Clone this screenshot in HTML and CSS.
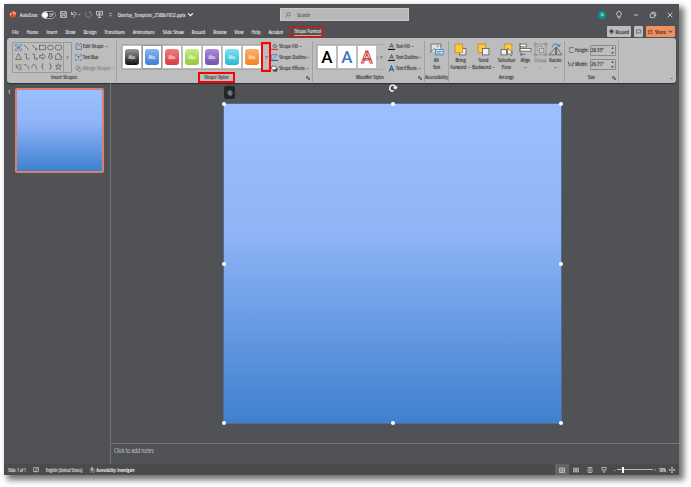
FILE: index.html
```html
<!DOCTYPE html>
<html lang="en">
<head>
<meta charset="utf-8">
<title>Overlay_Template_2588x1952.pptx</title>
<link rel="stylesheet" href="styles.css">
</head>
<body>
<div class="app">
  <header class="titlebar">
    <div class="quick">
      <svg class="logo" viewBox="0 0 12 12"><circle cx="6.5" cy="6" r="5.5" fill="#d9512f"/><path d="M6.500 .5a5.500 5.500 0 0 1 5.500 5.500h-5.500z" fill="#f59a7b"/><rect y="3" width="6" height="6" rx="1" fill="#b7321a"/><path d="M2.200 8V4.200h1.300a1.100 1.100 0 0 1 0 2.300H2.200" stroke="#fff" fill="none"/></svg>
      <label class="autosave">AutoSave <span class="toggle"><input type="checkbox"><span>Off</span></span></label>
      <button aria-label="Save"><svg viewBox="0 0 12 12"><path d="M1 1h9l1 1v9H1zM3 1v4h6V1M3 11V7h6v4"/></svg></button>
      <button aria-label="Undo" class="wide"><svg viewBox="0 0 18 12"><path d="M1 1v5h5M1 6c3-5 8-5 8-1 0 2-3 4-5 6M13 5l2 2 2-2"/></svg></button>
      <button aria-label="Redo" class="dim"><svg viewBox="0 0 12 12"><path d="M9 2a5 5 0 1 1-6 0M9 5V1h-3"/></svg></button>
      <button aria-label="Present"><svg viewBox="0 0 12 12"><path d="M0 1h12M1 1v6h10V1M6 7v4M3 11h6M5 3l3 1-3 2z"/></svg></button>
      <button aria-label="Customize"><svg viewBox="0 0 12 12"><path d="M4 4h4M4 7l2 2 2-2"/></svg></button>
      <button class="filename">Overlay_Template_2588x1952.pptx <svg class="chev" viewBox="0 0 6 6"><path d="M1 2l2 2 2-2"/></svg></button>
    </div>
    <label class="search"><svg viewBox="0 0 12 12"><circle cx="7" cy="4.500" r="3.500"/><path d="M4.500 7L1 11"/></svg><input type="text" placeholder="Search" aria-label="Search"></label>
    <div class="window">
      <span class="avatar">JD</span>
      <button aria-label="Tips"><svg viewBox="0 0 12 12"><path d="M4 9V7a3.500 3.500 0 1 1 4 0v2zM5 11h2"/></svg></button>
      <button aria-label="Minimize"><svg viewBox="0 0 12 12"><path d="M3 6h6"/></svg></button>
      <button aria-label="Restore"><svg viewBox="0 0 12 12"><rect x="2" y="4" width="6" height="6" rx="1"/><path d="M4 2h4q2 0 2 2v4"/></svg></button>
      <button aria-label="Close"><svg viewBox="0 0 12 12"><path d="M2.500 2.500l7 7M9.500 2.500l-7 7"/></svg></button>
    </div>
  </header>

  <div class="tabrow">
    <nav class="tabs"><a href="#">File</a><a href="#">Home</a><a href="#">Insert</a><a href="#">Draw</a><a href="#">Design</a><a href="#">Transitions</a><a href="#">Animations</a><a href="#">Slide Show</a><a href="#">Record</a><a href="#">Review</a><a href="#">View</a><a href="#">Help</a><a href="#">Acrobat</a><a href="#" class="current"><span>Shape Format</span></a></nav>
    <div class="actions">
      <button><svg viewBox="0 0 12 12"><circle cx="6" cy="6" r="5"/><circle cx="6" cy="6" r="2.500" fill="#222"/></svg>Record</button>
      <button aria-label="Comments"><svg viewBox="0 0 12 12"><path d="M1 2h10v7H6l-3 2V9H1z"/></svg></button>
      <button class="share"><svg viewBox="0 0 12 12"><path d="M5 3H1v8h9V8M4 8c0-3 2-4 5-4M7 1l4 3-4 3"/></svg>Share<svg class="chev" viewBox="0 0 6 6"><path d="M1 2l2 2 2-2"/></svg></button>
    </div>
  </div>

  <main class="ribbon">
    <section class="group insert">
      <div class="tools">
        <div class="shapes">
          <div class="shapegrid">
            <svg class="blue" viewBox="0 0 12 12"><path d="M1 4V1h3M8 1h3v3M11 8v3H8M4 11H1V8M3 4h6M3 6h6M3 8h6"/></svg>
            <svg viewBox="0 0 12 12"><path d="M2 2l8 8"/></svg>
            <svg viewBox="0 0 12 12"><path d="M2 2l8 8M10 7v3H7"/></svg>
            <svg viewBox="0 0 12 12"><rect x="1" y="2" width="10" height="8"/></svg>
            <svg viewBox="0 0 12 12"><ellipse cx="6" cy="6" rx="5" ry="4"/></svg>
            <svg viewBox="0 0 12 12"><rect x="1" y="2" width="10" height="8" rx="2"/></svg>
            <svg viewBox="0 0 12 12"><path d="M6 1l5 10H1z"/></svg>
            <svg viewBox="0 0 12 12"><path d="M2 2h4v8h5"/></svg>
            <svg viewBox="0 0 12 12"><path d="M2 2h4v8h5M9 8l2 2-2 2"/></svg>
            <svg viewBox="0 0 12 12"><path d="M1 4h5V1l5 5-5 5V8H1z"/></svg>
            <svg viewBox="0 0 12 12"><path d="M4 1h4v6h2l-4 4-4-4h2z"/></svg>
            <svg viewBox="0 0 12 12"><path d="M1 11V4l4-3h3v4h3v6z"/></svg>
            <svg viewBox="0 0 12 12"><path d="M2 2c0 6 2 9 9 9M2 7c6 0 3-6 7-4s-3 5 2 6"/></svg>
            <svg viewBox="0 0 12 12"><path d="M1 3c5-1 8 2 9 8"/></svg>
            <svg viewBox="0 0 12 12"><path d="M1 8c3-9 5-9 9 3"/></svg>
            <svg viewBox="0 0 12 12"><path d="M8 1C4 1 8 6 4 6c4 0 0 5 4 5"/></svg>
            <svg viewBox="0 0 12 12"><path d="M4 1c4 0 0 5 4 5-4 0 0 5-4 5"/></svg>
            <svg viewBox="0 0 12 12"><path d="M6 1l1.500 3.500H11L8 7l1 4-3-2-3 2 1-4-3-2.500h3.500z"/></svg>
          </div>
          <button class="more" aria-label="More shapes"><svg viewBox="0 0 6 6"><path d="M1 1h4M1 3l2 2 2-2"/></svg></button>
        </div>
        <div class="list">
          <button><svg class="blue" viewBox="0 0 12 12"><path d="M2 1h3M8 1h3M2 1v10h9V1M5 1l4 5"/></svg>Edit Shape<svg class="chev" viewBox="0 0 6 6"><path d="M1 2l2 2 2-2"/></svg></button>
          <button><svg class="blue" viewBox="0 0 12 12"><path d="M1 4V1h3M8 1h3v3M11 8v3H8M4 11H1V8M3 4h6M6 4v5"/></svg>Text Box</button>
          <button class="dim"><svg viewBox="0 0 12 12"><circle cx="4.500" cy="4.500" r="3.500"/><circle cx="7.500" cy="7.500" r="3.500"/></svg>Merge Shapes<svg class="chev" viewBox="0 0 6 6"><path d="M1 2l2 2 2-2"/></svg></button>
        </div>
      </div>
      <h2>Insert Shapes</h2>
    </section>

    <section class="group styles">
      <div class="tools">
        <div class="gallery">
          <button class="swatch black"><span>Abc</span></button><button class="swatch azure picked"><span>Abc</span></button><button class="swatch red"><span>Abc</span></button><button class="swatch green"><span>Abc</span></button><button class="swatch purple"><span>Abc</span></button><button class="swatch cyan"><span>Abc</span></button><button class="swatch orange"><span>Abc</span></button>
          <button class="more marked" aria-label="More styles"><svg viewBox="0 0 6 6"><path d="M1 1h4M1 3l2 2 2-2"/></svg></button>
        </div>
        <div class="list">
          <button><svg viewBox="0 0 12 12"><path d="M3 5l4-3 3 4-4 2z"/><path d="M0 11h12" stroke="#d33" stroke-width="2"/></svg>Shape Fill<svg class="chev" viewBox="0 0 6 6"><path d="M1 2l2 2 2-2"/></svg></button>
          <button><svg viewBox="0 0 12 12"><path d="M10 1H1v8M4 8l7-7" stroke="#1d66b5"/><path d="M0 11h12" stroke="#1d66b5" stroke-width="2"/></svg>Shape Outline<svg class="chev" viewBox="0 0 6 6"><path d="M1 2l2 2 2-2"/></svg></button>
          <button><svg viewBox="0 0 12 12"><path d="M3 8l-2-2 1-4h6l1 4-2 2z" fill="#fff"/><path d="M4 10h5l2-4" stroke-width="2"/></svg>Shape Effects<svg class="chev" viewBox="0 0 6 6"><path d="M1 2l2 2 2-2"/></svg></button>
        </div>
      </div>
      <h2><span class="outlined">Shape Styles</span></h2>
      <svg class="launcher" viewBox="0 0 6 6"><path d="M1 4V1h3M2 2l3 3M5 3v2H3"/></svg>
    </section>

    <section class="group wordart">
      <div class="tools">
        <div class="gallery">
          <button class="letter">A</button><button class="letter mid">A</button><button class="letter line">A</button>
          <button class="more" aria-label="More WordArt"><svg viewBox="0 0 6 6"><path d="M1 1h4M1 3l2 2 2-2"/></svg></button>
        </div>
        <div class="list">
          <button><svg viewBox="0 0 12 12"><path d="M3 8l3-7 3 7M4 6h4"/><path d="M0 11h12" stroke="#111" stroke-width="2"/></svg>Text Fill<svg class="chev" viewBox="0 0 6 6"><path d="M1 2l2 2 2-2"/></svg></button>
          <button><svg viewBox="0 0 12 12"><path d="M3 8l3-7 3 7M4 6h4"/><path d="M0 11h12" stroke="#111" stroke-width="2"/></svg>Text Outline<svg class="chev" viewBox="0 0 6 6"><path d="M1 2l2 2 2-2"/></svg></button>
          <button><svg class="blue" viewBox="0 0 12 12"><path d="M2 11l4-9 4 9M4 8h4" stroke-width="2"/></svg>Text Effects<svg class="chev" viewBox="0 0 6 6"><path d="M1 2l2 2 2-2"/></svg></button>
        </div>
      </div>
      <h2>WordArt Styles</h2>
      <svg class="launcher" viewBox="0 0 6 6"><path d="M1 4V1h3M2 2l3 3M5 3v2H3"/></svg>
    </section>

    <section class="group access">
      <div class="tools">
        <button class="big"><svg viewBox="0 0 12 12"><path d="M1 9V1h9v4M1 8l3-3 2 2M6 3h2" fill="#e4e4e4"/><rect x="5" y="6" width="7" height="5" fill="#d9eaf7" stroke="#2878b8"/><path d="M6 8h5M6 9.500h4" stroke="#2878b8"/></svg><span>Alt<br>Text</span></button>
      </div>
      <h2>Accessibility</h2>
    </section>

    <section class="group arrange">
      <div class="tools">
        <button class="big"><svg viewBox="0 0 12 12"><rect x="5" y="5" width="6" height="6" fill="#eee"/><rect x="1" y="1" width="7" height="8" fill="#ffc83d" stroke="#c88a10"/></svg><span>Bring<br>Forward<svg class="chev" viewBox="0 0 6 6"><path d="M1 2l2 2 2-2"/></svg></span></button>
        <button class="big"><svg viewBox="0 0 12 12"><rect x="1" y="1" width="7" height="8" fill="#ffc83d" stroke="#c88a10"/><rect x="5" y="5" width="6" height="6" fill="#eee"/></svg><span>Send<br>Backward<svg class="chev" viewBox="0 0 6 6"><path d="M1 2l2 2 2-2"/></svg></span></button>
        <button class="big"><svg viewBox="0 0 12 12"><rect x="4" y="1" width="7" height="7" fill="#ffc83d" stroke="#c88a10"/><rect x="1" y="6" width="5" height="5" fill="#eee"/><path d="M7 5v6l1.500-1.500L10 12l1-1-1-2h2z" fill="#fff"/></svg><span>Selection<br>Pane</span></button>
        <button class="big slim"><svg viewBox="0 0 12 12"><path d="M1 0v9"/><rect x="1" y="1" width="6" height="2.500" fill="#fff"/><rect x="1" y="5" width="10" height="2.500" fill="#fff"/><path d="M6 10.500H1M3 9l-2 1.500L3 12" stroke="#1d66b5"/></svg><span>Align<br><svg class="chev" viewBox="0 0 6 6"><path d="M1 2l2 2 2-2"/></svg></span></button>
        <button class="big slim dim"><svg viewBox="0 0 12 12"><rect x="1" y="1" width="10" height="10"/><rect x="3" y="3" width="4" height="4" fill="#ddd"/><rect x="5" y="5" width="4" height="4" fill="#ddd"/><path d="M0 0h2v2H0zM10 0h2v2h-2zM0 10h2v2H0zM10 10h2v2h-2z"/></svg><span>Group<br><svg class="chev" viewBox="0 0 6 6"><path d="M1 2l2 2 2-2"/></svg></span></button>
        <button class="big slim"><svg viewBox="0 0 12 12"><path d="M6 4v7H0zM7 4v7h5z"/><path d="M3 4c0-4 6-4 6-1M7 2l2 1.500L10.500 1" stroke="#1d66b5"/></svg><span>Rotate<br><svg class="chev" viewBox="0 0 6 6"><path d="M1 2l2 2 2-2"/></svg></span></button>
      </div>
      <h2>Arrange</h2>
    </section>

    <section class="group size">
      <div class="fields">
        <label for="height"><svg viewBox="0 0 12 12"><path d="M5 1h6M5 11h6"/><path d="M3 1v10M1 3l2-2 2 2M1 9l2 2 2-2" stroke="#1d66b5"/></svg>Height:</label><span class="spin"><input type="text" id="height" value='20.33"'><svg viewBox="0 0 6 12"><path d="M2 4l1-2 1 2M2 8l1 2 1-2"/></svg></span>
        <label for="width"><svg viewBox="0 0 12 12"><path d="M1 1v5h10V1"/><path d="M1 9h10M3 7L1 9l2 2M9 7l2 2-2 2" stroke="#1d66b5"/></svg>Width:</label><span class="spin"><input type="text" id="width" value='26.75"'><svg viewBox="0 0 6 12"><path d="M2 4l1-2 1 2M2 8l1 2 1-2"/></svg></span>
      </div>
      <h2>Size</h2>
      <svg class="launcher" viewBox="0 0 6 6"><path d="M1 4V1h3M2 2l3 3M5 3v2H3"/></svg>
    </section>
    <button class="collapse" aria-label="Collapse ribbon"><svg class="chev" viewBox="0 0 6 6"><path d="M1 2l2 2 2-2"/></svg></button>
  </main>

  <div class="workspace">
    <aside class="thumbs"><span>1</span><div class="thumb"></div></aside>
    <div class="editor">
      <div class="canvas">
        <div class="slide">
          <i class="h nw"></i><i class="h n"></i><i class="h ne"></i><i class="h w"></i><i class="h e"></i><i class="h sw"></i><i class="h s"></i><i class="h se"></i>
          <svg class="turn" viewBox="0 0 12 12"><path d="M7 10.500H4A4.500 4.500 0 1 1 10 6M7 5l3 2 2-3"/></svg>
          <button class="badge" aria-label="Designer"><svg viewBox="0 0 12 12"><path d="M6 1a5 5 0 0 0-2 9M6 11a5 5 0 0 0 2-9M6 1v10M4 5l4-1M4 8l4-1"/></svg></button>
        </div>
      </div>
      <div class="notes">Click to add notes</div>
    </div>
  </div>

  <footer class="status">
    <span>Slide 1 of 1</span>
    <svg viewBox="0 0 12 12"><path d="M6 2v9M1 1h4l1 1 1-1h4v8H7l-1 1-1-1H1zM8 4h2"/></svg>
    <span class="lang">English (United States)</span>
    <span class="check"><svg viewBox="0 0 12 12"><circle cx="6" cy="2" r="1.500"/><path d="M1 4l4 1-1 6M11 4L7 5l1 3M5 5h2M7 9l2 2 3-4"/></svg>Accessibility: Investigate</span>
    <div class="views">
      <button class="on" aria-label="Normal"><svg viewBox="0 0 12 12"><path d="M1 2h10v9H1zM4 2v9M4 8h7M6 4h3M6 6h3"/></svg></button>
      <button aria-label="Sorter"><svg viewBox="0 0 12 12"><path d="M1 2h4v3H1zM7 2h4v3H7zM1 7h4v3H1zM7 7h4v3H7z"/></svg></button>
      <button aria-label="Reading"><svg viewBox="0 0 12 12"><path d="M2 1h8v10H2zM6 1v10M4 4h1M7 4h1M4 7h1M7 7h1"/></svg></button>
      <button aria-label="Slide show"><svg viewBox="0 0 12 12"><path d="M1 1h10M2 1v5h8V1M6 6v5M4 9l2 2 2-2"/></svg></button>
    </div>
    <div class="zoom"><button aria-label="Zoom out">−</button><input type="range" min="0" max="100" value="14" aria-label="Zoom"><button aria-label="Zoom in">+</button></div>
    <span>38%</span>
    <svg viewBox="0 0 12 12"><path d="M4 4h4v4H4zM6 0v3M6 9v3M0 6h3M9 6h3M4.500 1.500L6 0l1.500 1.500M4.500 10.500L6 12l1.500-1.500M1.500 4.500L0 6l1.500 1.500M10.500 4.500L12 6l-1.500 1.500"/></svg>
  </footer>
</div>
</body>
</html>
```
FILE: styles.css
```css
* { box-sizing: border-box; }
body {
  margin: 0;
  height: 100vh;
  padding: 4px 12px 12px 4px;
  background: #fff;
  font: 300 6px/8px "Open Sans Condensed Light", "Open Sans Condensed", "Liberation Sans Narrow", Roboto, sans-serif;
  text-shadow: 0 0 1px currentColor;
  color: #fff;
}
button, input { font: inherit; color: inherit; text-shadow: inherit; background: none; border: 0; padding: 0; margin: 0; }
button { display: flex; align-items: center; white-space: nowrap; }
a { color: inherit; text-decoration: none; }
svg { display: block; flex: none; width: 8px; height: 8px; fill: none; stroke: currentColor; overflow: visible; }
svg.chev { width: 3px; height: 3px; }
svg.blue { color: #1d66b5; }
.dim { opacity: .45; }

.app {
  display: flex;
  flex-direction: column;
  height: 100%;
  background: #505255;
  box-shadow: 4px 4px 6px 1px rgba(0, 0, 0, .55);
}

.titlebar { display: grid; grid-template-columns: 276px 129px 1fr; align-items: center; height: 21px; flex: none; }
.quick { display: flex; align-items: center; gap: 4px; padding-left: 5px; }
.quick svg { width: 7px; height: 7px; }
.quick .logo { stroke: none; }
.quick .wide svg { width: 10px; }
.autosave { display: flex; align-items: center; gap: 3px; }
.toggle { display: flex; align-items: center; gap: 1px; width: 15px; height: 8px; padding-left: 1px; border-radius: 4px; background: #2c2e30; outline: 1px solid #aaa; outline-offset: -1px; font-size: 5px; }
.toggle input { appearance: none; width: 6px; height: 6px; border-radius: 50%; background: #fff; flex: none; }
.filename { gap: 2px; }
.search { display: flex; align-items: center; gap: 6px; height: 13px; padding: 0 4px; background: #b9b9b9; border: 1px solid #c8c8c8; color: #444; }
.search svg { width: 6px; height: 6px; }
.search input { flex: 1; min-width: 0; outline: 0; }
.search input::placeholder { color: #444; }
.window { display: flex; align-items: center; justify-content: flex-end; gap: 9px; padding-right: 5px; }
.avatar { width: 8px; height: 8px; border-radius: 50%; background: #0a8f8c; font-size: 4px; text-align: center; }

.tabrow { display: flex; justify-content: space-between; align-items: center; height: 13px; flex: none; padding: 0 4px 0 8px; }
.tabs { display: flex; align-items: center; gap: 8px; white-space: nowrap; }
.tabs .current { border: 1px solid #f00; padding: 0 2px; outline: 1px solid #f00; outline-offset: -1px; }
.tabs .current span { display: block; border-bottom: 1px solid #e8a080; }
.actions { display: flex; gap: 3px; color: #111; }
.actions button { height: 11px; padding: 0 2px; gap: 2px; background: #bdbdbd; border-radius: 1px; }
.actions svg { width: 5px; height: 5px; }
.actions .share { background: #ee9160; }

.ribbon { display: flex; height: 45px; flex: none; margin: 0 3px; background: #bdbdbd; color: #222; border-radius: 3px; box-shadow: 0 1px 1px #2e3032; }
.group { display: flex; flex-direction: column; flex: none; position: relative; margin: 3px 0 1px; border-right: 1px solid #a2a2a2; }
.group h2 { margin: 0; height: 9px; font-size: 6px; line-height: 9px; font-weight: 300; text-align: center; white-space: nowrap; }
.tools { display: flex; flex: 1; align-items: center; gap: 3px; }
.insert { width: 110px; padding-left: 5px; }
.styles { width: 196px; padding-left: 4px; }
.wordart { width: 112px; padding-left: 3px; }
.access { width: 24px; }
.arrange { width: 116px; }
.size { width: 54px; }
.styles .tools { gap: 1px; }
.shapes { display: flex; height: 31px; border: 1px solid #999; border-radius: 1px; color: #444; }
.shapegrid { display: grid; grid-template-columns: repeat(6, 8px); align-content: space-around; justify-items: center; padding: 0 1px; }
.shapegrid svg { width: 7px; height: 7px; }
.more { width: 8px; justify-content: center; border-left: 1px solid #999; }
.more svg { width: 3px; height: 3px; }
.list { display: flex; flex-direction: column; gap: 3px; }
.list button { gap: 1px; height: 8px; }
.list svg:first-child { width: 7px; height: 7px; }
.gallery { display: flex; align-items: center; height: 26px; border: 1px solid #aaa; border-right: 0; border-radius: 1px; }
.swatch { width: 18px; height: 22px; margin: 0 1px; padding: 2px; background: #fff; }
.swatch span { flex: 1; height: 16px; line-height: 16px; border-radius: 3px; color: #fff; text-align: center; }
.picked { outline: 1px solid #999; }
.black span { background: linear-gradient(#999, #111); }
.azure span { background: linear-gradient(#86b4f5, #3d7ed0); }
.red span { background: linear-gradient(#f27c7c, #d63c40); }
.green span { background: linear-gradient(#c6ee7a, #92c83e); }
.purple span { background: linear-gradient(#ab8cd8, #7650ab); }
.cyan span { background: linear-gradient(#7fe2f5, #2bb4d3); }
.orange span { background: linear-gradient(#ffb066, #f58220); }
.more.marked { height: 28px; border: 1px solid #f00; outline: 1px solid #f00; }
.outlined { display: inline-block; height: 9px; line-height: 7px; padding: 0 4px; border: 1px solid #f00; outline: 1px solid #f00; }
.launcher { position: absolute; right: 2px; bottom: 2px; width: 4px; height: 4px; }
.letter { width: 18px; height: 22px; margin: 0 1px; justify-content: center; background: #fff; color: #000; font: 500 17px/22px Roboto, sans-serif; text-shadow: none; }
.letter.mid { color: #4077c3; }
.letter.line { color: #fff; -webkit-text-stroke: 1px #cf4a50; }
.big { flex-direction: column; gap: 1px; width: 23px; line-height: 7px; text-align: center; }
.big > svg { width: 13px; height: 13px; stroke-width: .7px; color: #555; }
.big .chev { display: inline-block; margin-left: 1px; }
.slim { width: 15px; }
.access .big { width: 100%; }
.arrange .tools { gap: 0; }
.fields { flex: 1; display: grid; grid-template-columns: 20px 26px; align-content: center; gap: 3px 2px; padding-left: 3px; }
.fields label { display: flex; align-items: center; gap: 1px; }
.fields label svg { width: 6px; height: 6px; }
.spin { display: flex; align-items: center; height: 11px; border: 1px solid #8a8a8a; border-radius: 1px; }
.spin input { flex: 1; min-width: 0; width: 0; }
.spin svg { width: 5px; height: 9px; }
.collapse { margin-left: auto; align-self: flex-end; padding: 3px; }

.workspace { display: flex; flex: 1; min-height: 0; }
.thumbs { display: flex; gap: 5px; width: 107px; padding: 5px 6px 0 4px; border-right: 1px solid #737577; }
.thumb { flex: 1; height: 85px; border: 2px solid #d88070; border-radius: 2px; }
.thumb, .slide { background-image: linear-gradient(#9cc0ff, #8fb5f7 40%, #3f80ce); }
.editor { flex: 1; display: flex; flex-direction: column; }
.canvas { flex: 1; padding: 20px 117px 19px 112px; display: flex; }
.slide { position: relative; flex: 1; border: 1px solid #4e6c96; }
.h { position: absolute; width: 4px; height: 4px; margin: -2px; border-radius: 50%; background: #fff; }
.nw, .n, .ne { top: 0; }
.w, .e { top: 50%; }
.sw, .s, .se { top: 100%; }
.nw, .w, .sw { left: 0; }
.n, .s { left: 50%; }
.ne, .e, .se { left: 100%; }
.turn { position: absolute; left: 50%; top: -20px; margin-left: -4px; color: #fff; stroke-width: 2px; }
.badge { position: absolute; left: 0; top: -18px; width: 11px; height: 13px; justify-content: center; border-radius: 2px; background: #252628; color: #ddd; }
.badge svg { width: 6px; height: 6px; }
.notes { height: 21px; padding: 3px; border-top: 1px solid #737577; font-size: 7px; color: #e4e4e4; text-shadow: none; }

.status { display: flex; align-items: center; gap: 3px; height: 11px; flex: none; padding: 0 4px; background: #4a4b4c; white-space: nowrap; font-size: 5px; }
.status svg { width: 6px; height: 6px; }
.status > svg:nth-child(2) { margin: 0 4px; }
.check { display: flex; align-items: center; gap: 1px; margin-left: 4px; font-weight: 700; text-shadow: none; }
.views { display: flex; margin-left: auto; }
.views button { width: 14px; height: 11px; justify-content: center; }
.views .on { background: #626365; }
.zoom { display: flex; align-items: center; gap: 1px; }
.zoom input { appearance: none; width: 36px; height: 1px; background: #bbb; }
.zoom input::-webkit-slider-thumb { appearance: none; width: 2px; height: 6px; background: #fff; }
```
